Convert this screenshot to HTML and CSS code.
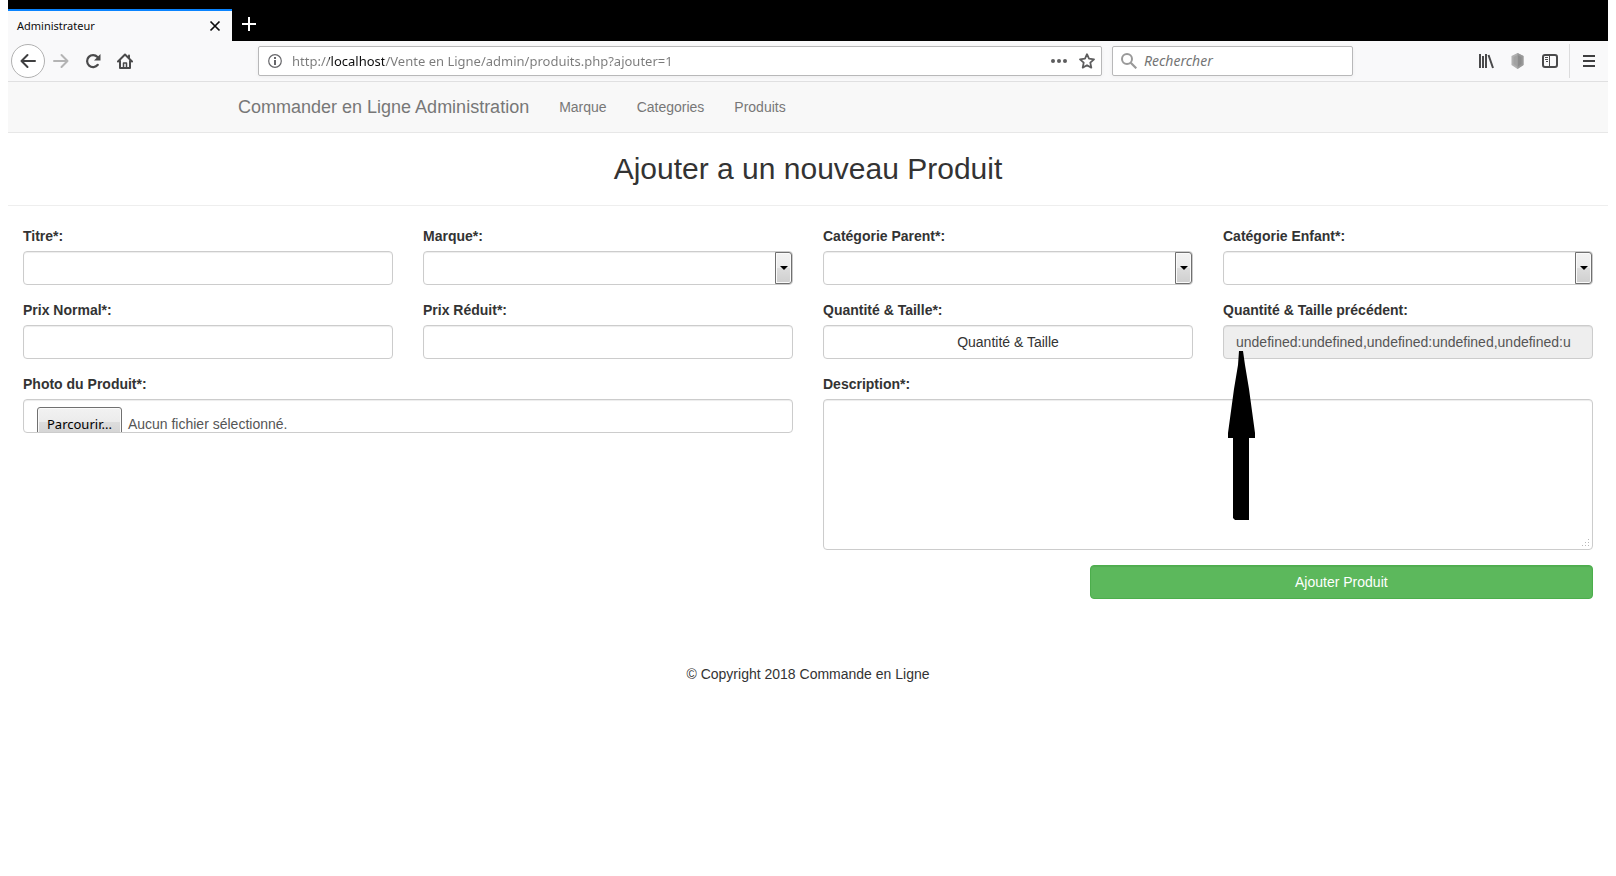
FILE: index.html
```html
<!DOCTYPE html>
<html lang="fr">
<head>
<meta charset="utf-8">
<title>Administrateur</title>
<link rel="stylesheet" href="styles.css">
</head>
<body>
<div class="browser">
  <div class="tab-strip">
    <div class="tab">
      <span class="tab-title">Administrateur</span>
      <button class="icon-button" type="button" aria-label="Fermer l'onglet">
        <svg width="12" height="12" viewBox="0 0 12 12" fill="none" stroke="#0c0c0d" stroke-width="1.700"><path d="M1.500 1.500l9 9M10.500 1.500l-9 9"/></svg>
      </button>
    </div>
    <button class="icon-button new-tab" type="button" aria-label="Nouvel onglet">
      <svg width="14" height="14" viewBox="0 0 14 14" fill="none" stroke="#fff" stroke-width="2"><path d="M7 0v14M0 7h14"/></svg>
    </button>
  </div>

  <div class="toolbar">
    <div class="history">
      <button class="icon-button back" type="button" aria-label="Page précédente">
        <svg width="16" height="16" viewBox="0 0 16 16" fill="none" stroke="#3f3f40" stroke-width="2" stroke-linecap="round" stroke-linejoin="round"><path d="M15 8H1.500M7.500 2L1.500 8l6 6"/></svg>
      </button>
      <button class="icon-button" type="button" aria-label="Page suivante">
        <svg width="16" height="16" viewBox="0 0 16 16" fill="none" stroke="#b4b4b4" stroke-width="2" stroke-linecap="round" stroke-linejoin="round"><path d="M1 8h13.500M8.500 2l6 6-6 6"/></svg>
      </button>
    </div>
    <button class="icon-button" type="button" aria-label="Actualiser">
      <svg width="16" height="16" viewBox="0 0 16 16"><path d="M12.800 11.800A6 6 0 1 1 12.500 4" fill="none" stroke="#4a4a4b" stroke-width="2.200" stroke-linecap="round"/><path d="M15.500 1v6.500H9z" fill="#4a4a4b"/></svg>
    </button>
    <button class="icon-button" type="button" aria-label="Accueil">
      <svg width="16" height="16" viewBox="0 0 16 16" fill="none" stroke="#4a4a4b" stroke-width="2" stroke-linecap="round" stroke-linejoin="round"><path d="M1 8.500L8 1.500l7 7M3 8v7h10V8"/><path d="M6.500 14v-4h3v4" stroke-width="1.500"/><path d="M12 2.500v2" /></svg>
    </button>
    <div class="spacer"></div>
    <div class="box address">
      <svg width="14" height="14" viewBox="0 0 14 14"><circle cx="7" cy="7" r="6.300" fill="none" stroke="#66666a" stroke-width="1.200"/><path d="M6 6h2v5H6zM6 3h2v2H6z" fill="#66666a"/></svg>
      <input class="url" type="text" aria-label="Adresse" value="http://localhost/Vente en Ligne/admin/produits.php?ajouter=1">
      <button class="icon-button" type="button" aria-label="Actions de la page">
        <svg width="16" height="16" viewBox="0 0 16 16" fill="#5d5d5e"><circle cx="2" cy="8" r="2"/><circle cx="8" cy="8" r="2"/><circle cx="14" cy="8" r="2"/></svg>
      </button>
      <button class="icon-button" type="button" aria-label="Marquer cette page">
        <svg width="16" height="16" viewBox="0 0 16 16" fill="none" stroke="#5d5d5e" stroke-width="1.800" stroke-linejoin="round"><path d="M8 1.200l2 4.500 5 .6-3.700 3.300 1 5L8 12.200l-4.300 2.400 1-5L1 6.300l5-.6z"/></svg>
      </button>
    </div>
    <div class="box search">
      <svg width="16" height="16" viewBox="0 0 16 16" fill="none" stroke="#999"><circle cx="6" cy="6" r="5" stroke-width="2"/><path d="M9.700 9.700l5.600 5.600" stroke-width="2.200"/></svg>
      <input class="search-input" type="text" aria-label="Rechercher" placeholder="Rechercher">
    </div>
    <div class="spacer"></div>
    <div class="tools">
      <button class="icon-button" type="button" aria-label="Bibliothèque">
        <svg width="16" height="16" viewBox="0 0 16 16" fill="none" stroke="#4a4a4b" stroke-width="2"><path d="M2 1v14M5 3v12M8 1v14M10.500 2l4.500 13"/></svg>
      </button>
      <button class="icon-button" type="button" aria-label="Protection">
        <svg width="16" height="16" viewBox="0 0 16 16"><path d="M7.500 0l6 3v9l-6 4-6-4V3z" fill="#b0b0b0"/><path d="M7.500 0l6 3v9l-6 4z" fill="#999"/><path d="M7.500 2l4 2v7l-4 3z" fill="#8c8c8c"/><path d="M7.500 2l-4 2v7l4 3z" fill="#a2a2a2"/></svg>
      </button>
      <button class="icon-button" type="button" aria-label="Panneaux latéraux">
        <svg width="16" height="16" viewBox="0 0 16 16" fill="none" stroke="#4a4a4b"><rect x="1" y="2" width="14" height="12" rx="2" stroke-width="2"/><path d="M7.500 2v12M3 4.500h3M3 6.500h3M4 8.500h2"/></svg>
      </button>
    </div>
    <div class="menu">
      <button class="icon-button" type="button" aria-label="Ouvrir le menu">
        <svg width="12" height="12" viewBox="0 0 12 12" fill="none" stroke="#3f3f40" stroke-width="2"><path d="M0 1h12M0 6h12M0 11h12"/></svg>
      </button>
    </div>
  </div>

  <nav class="navbar">
    <div class="container">
      <a class="brand" href="#">Commander en Ligne Administration</a>
      <a class="nav-link" href="#">Marque</a>
      <a class="nav-link" href="#">Categories</a>
      <a class="nav-link" href="#">Produits</a>
    </div>
  </nav>

  <main>
    <h2 class="heading">Ajouter a un nouveau Produit</h2>
    <form class="product-form">
      <div class="field">
        <label for="titre">Titre*:</label>
        <input class="control" id="titre" type="text">
      </div>
      <div class="field">
        <label for="marque">Marque*:</label>
        <div class="select-wrap"><select class="control" id="marque"><option></option></select><span class="arrow-box"></span></div>
      </div>
      <div class="field">
        <label for="parent">Catégorie Parent*:</label>
        <div class="select-wrap"><select class="control" id="parent"><option></option></select><span class="arrow-box"></span></div>
      </div>
      <div class="field">
        <label for="enfant">Catégorie Enfant*:</label>
        <div class="select-wrap"><select class="control" id="enfant"><option></option></select><span class="arrow-box"></span></div>
      </div>
      <div class="field">
        <label for="prix">Prix Normal*:</label>
        <input class="control" id="prix" type="text">
      </div>
      <div class="field">
        <label for="reduit">Prix Réduit*:</label>
        <input class="control" id="reduit" type="text">
      </div>
      <div class="field">
        <label for="quantite">Quantité &amp; Taille*:</label>
        <button class="control sizes" id="quantite" type="button">Quantité &amp; Taille</button>
      </div>
      <div class="field">
        <label for="precedent">Quantité &amp; Taille précédent:</label>
        <input class="control" id="precedent" type="text" readonly value="undefined:undefined,undefined:undefined,undefined:u">
        <svg class="pointer" width="28" height="170" viewBox="0 0 28 170"><path d="M11 0h4l2 14 4 24 6 44v5h-6v82H7l-2-2V87H0v-5l6-44 4-24z"/></svg>
      </div>
      <div class="field wide">
        <label for="photo">Photo du Produit*:</label>
        <div class="control file">
          <input class="file-input" id="photo" type="file">
          <label class="browse" for="photo">Parcourir...</label>
          <span>Aucun fichier sélectionné.</span>
        </div>
      </div>
      <div class="field wide">
        <label for="description">Description*:</label>
        <div class="text-wrap">
          <textarea class="control" id="description"></textarea>
          <svg class="grip" width="8" height="8" viewBox="0 0 8 8" fill="#b8b8b8"><path d="M7 0h1v1H7zM4 3h1v1H4zM7 3h1v1H7zM1 6h1v1H1zM4 6h1v1H4zM7 6h1v1H7z"/></svg>
        </div>
      </div>
      <div class="submit-row"><button class="submit" type="submit">Ajouter Produit</button></div>
    </form>
  </main>
  <footer class="footer">© Copyright 2018 Commande en Ligne</footer>
</div>
</body>
</html>
```
FILE: styles.css
```css
* { box-sizing: border-box; }

body {
  margin: 0 8px;
  background: #fff;
  color: #333;
  font: 14px/20px "Liberation Sans", Arial, sans-serif;
}

svg { display: block; flex: none; }
button, input, select, textarea { font: inherit; color: inherit; }

.icon-button {
  display: flex;
  padding: 0;
  border: 0;
  background: none;
}

/* Browser window */
.tab-strip {
  display: flex;
  height: 41px;
  padding-top: 9px;
  background: #000;
}

.tab {
  display: flex;
  align-items: center;
  justify-content: space-between;
  width: 224px;
  padding: 0 11px 0 9px;
  border-top: 2px solid #0a84ff;
  background: #f9f9fa;
  color: #0c0c0d;
  font: 11px/16px "Noto Sans", sans-serif;
}

.new-tab { align-self: center; margin: 0 0 2px 10px; }

.toolbar {
  display: flex;
  align-items: center;
  gap: 16px;
  height: 41px;
  padding-left: 3px;
  border-bottom: 1px solid #e0e0e1;
  background: #f9f9fa;
}

.history { display: flex; align-items: center; gap: 8px; }

.back {
  width: 34px;
  height: 34px;
  align-items: center;
  justify-content: center;
  border: 1px solid #b1b1b1;
  border-radius: 50%;
  background: #fff;
}

.spacer { width: 93px; flex: none; }

.box {
  display: flex;
  align-items: center;
  height: 30px;
  border: 1px solid #b8b8b9;
  border-radius: 2px;
  background: #fff;
  box-shadow: 0 1px 4px rgba(0, 0, 0, .05);
}

.box input {
  flex: 1;
  min-width: 0;
  padding: 0;
  border: 0;
  outline: 0;
  font: 13px/20px "Noto Sans", sans-serif;
}

.address { flex: 1; padding: 0 6px 0 9px; gap: 10px; }
.address .icon-button + .icon-button { margin-left: 2px; }

/* The host name is darker than the rest of the address */
.address .url {
  color: #7a7a7a;
  background: linear-gradient(90deg, #7a7a7a 37px, #0c0c0d 37px, #0c0c0d 92px, #7a7a7a 92px);
  background-clip: text;
  -webkit-background-clip: text;
  -webkit-text-fill-color: transparent;
}

.search { width: 241px; margin-left: -6px; padding: 0 8px; gap: 7px; }
.box .search-input { font-size: 14px; }
.search-input::placeholder { color: #757575; font-style: italic; }

.tools { display: flex; gap: 16px; }

.menu {
  display: flex;
  align-items: center;
  height: 34px;
  margin-left: -5px;
  padding: 0 13px;
  border-left: 1px solid #dcdcdd;
}

/* Page */
.navbar { border-bottom: 1px solid #e7e7e7; background: #f8f8f8; }

.container {
  display: flex;
  max-width: 1170px;
  margin: 0 auto;
}

.container a { padding: 15px; color: #777; text-decoration: none; }
.container .brand { font-size: 18px; }

.heading {
  margin: 0;
  padding: 20px 0;
  border-bottom: 1px solid #eee;
  font-size: 30px;
  font-weight: 500;
  line-height: 32px;
  text-align: center;
}

.product-form {
  display: grid;
  grid-template-columns: repeat(4, minmax(0, 1fr));
  gap: 15px 30px;
  padding: 20px 15px 0;
}

.field { position: relative; }
.field.wide { grid-column: span 2; }
.field > label { display: block; margin-bottom: 5px; font-weight: 700; }

.control {
  display: block;
  width: 100%;
  height: 34px;
  padding: 6px 12px;
  border: 1px solid #ccc;
  border-radius: 4px;
  background: #fff;
  box-shadow: inset 0 1px 1px rgba(0, 0, 0, .075);
  color: #555;
}

.control[readonly] { background: #eee; }
.sizes { color: #333; text-align: center; }

.select-wrap, .text-wrap { position: relative; }
select.control { appearance: none; }

.arrow-box {
  position: absolute;
  top: 1px;
  right: 1px;
  bottom: 1px;
  display: flex;
  align-items: center;
  justify-content: center;
  width: 17px;
  border: 1px solid #707070;
  border-radius: 0 3px 3px 0;
  background: linear-gradient(#f2f2f2, #ebebeb 50%, #ddd 50%, #cfcfcf);
  box-shadow: inset 0 0 0 1px #fafafa;
  pointer-events: none;
}

.arrow-box::after {
  content: "";
  border: 4px solid transparent;
  border-top-color: #000;
  border-bottom: 0;
}

.pointer { position: absolute; z-index: 1; top: 51px; left: 5px; pointer-events: none; }

.file {
  display: flex;
  align-items: flex-start;
  gap: 6px;
  padding: 7px 13px;
  overflow: hidden;
  line-height: 34px;
}

.file-input { position: absolute; width: 1px; height: 1px; opacity: 0; }

.browse {
  flex: none;
  padding: 0 9px;
  border: 1px solid #707070;
  border-radius: 3px;
  background: linear-gradient(#f2f2f2, #ebebeb 45%, #ddd 45%, #cfcfcf);
  box-shadow: inset 0 0 0 1px #fafafa;
  color: #000;
  font: 13px/32px "Noto Sans", sans-serif;
}

textarea.control { height: 151px; resize: vertical; }
textarea::-webkit-resizer { background: transparent; }
.grip { position: absolute; right: 4px; bottom: 3px; pointer-events: none; }

.submit-row {
  grid-column: 1 / -1;
  display: flex;
  justify-content: flex-end;
}

.submit {
  width: calc((100% + 30px) / 3 - 30px);
  height: 34px;
  border: 1px solid #4cae4c;
  border-radius: 4px;
  background: #5cb85c;
  box-shadow: inset 0 1px 1px rgba(0, 0, 0, .075);
  color: #fff;
}

.footer { padding: 65px 0 20px; text-align: center; }
```
